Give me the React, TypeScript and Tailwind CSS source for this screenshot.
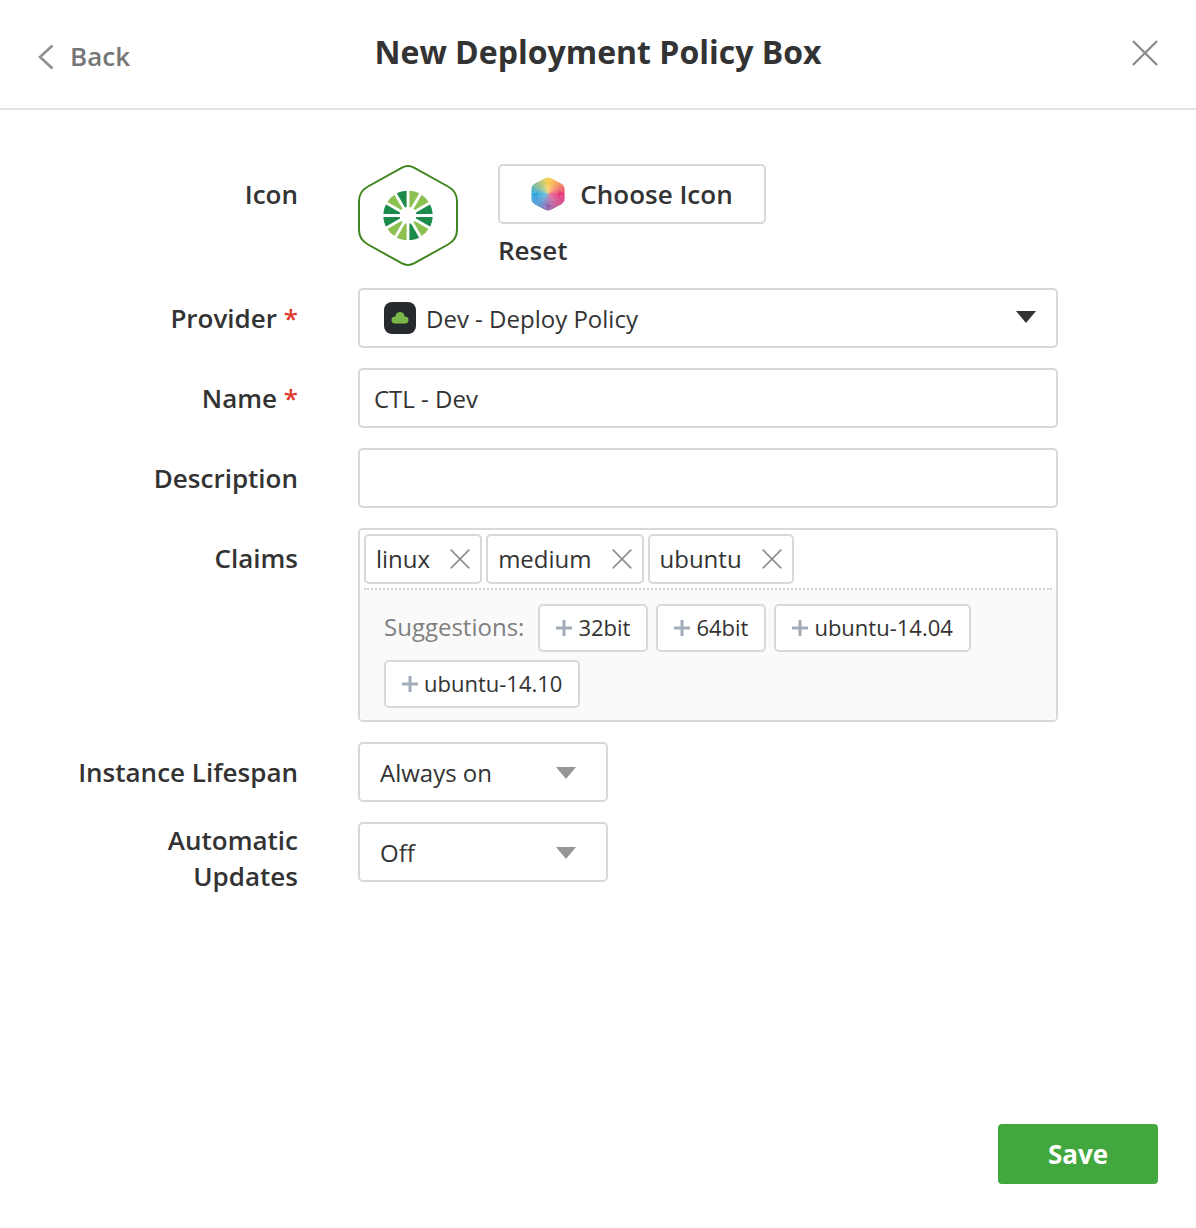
import React from "react";

function Label({ children, className = "" }: { children: React.ReactNode; className?: string }) {
  return (
    <div className={"w-[298px] shrink-0 text-right text-[26px] leading-[36px] font-semibold text-[#333333] " + className}>
      {children}
    </div>
  );
}

function Star() {
  return <span className="text-[#e0382f]"> *</span>;
}

function wedge(cx: number, cy: number, r1: number, a0: number, a1: number) {
  const p = (a: number) => {
    const t = ((a - 90) * Math.PI) / 180;
    return `${(cx + r1 * Math.cos(t)).toFixed(2)} ${(cy + r1 * Math.sin(t)).toFixed(2)}`;
  };
  return `M${cx} ${cy} L${p(a0)} A${r1} ${r1} 0 0 1 ${p(a1)} Z`;
}

function HexLogo() {
  const L = "#8cc152";
  const D = "#1b8a4b";
  const seq = [L, L, D, D, L, D, L, L, D, D, L, D];
  return (
    <svg width="100" height="103" viewBox="0 0 100 103" className="shrink-0">
      <path
        d="M44 3.6 Q50 0.6 56 3.6 L90 22.5 Q99 27.5 99 37 L99 66 Q99 75.5 90 80.5 L56 99.4 Q50 102.4 44 99.4 L10 80.5 Q1 75.5 1 66 L1 37 Q1 27.5 10 22.5 Z"
        fill="#fff"
        stroke="#3f861f"
        strokeWidth="2"
      />
      {seq.map((c, i) => (
        <path key={i} d={wedge(50, 51.5, 24.7, i * 30, i * 30 + 30)} fill={c} />
      ))}
      {[0, 30, 60, 90, 120, 150].map((a) => (
        <line key={a} x1="50" y1="24" x2="50" y2="79" stroke="#fff" strokeWidth="2.8" transform={`rotate(${a} 50 51.5)`} />
      ))}
      <circle cx="50" cy="51.5" r="8.5" fill="#fff" />
    </svg>
  );
}

const rainbow: [number, number[]][] = [
  [0, [248, 205, 76]],
  [45, [245, 150, 84]],
  [90, [232, 56, 122]],
  [135, [206, 80, 140]],
  [180, [144, 100, 172]],
  [225, [82, 150, 208]],
  [270, [46, 168, 224]],
  [315, [150, 190, 130]],
  [360, [248, 205, 76]],
];

function colorAt(a: number) {
  for (let i = 0; i < rainbow.length - 1; i++) {
    const [a0, c0] = rainbow[i];
    const [a1, c1] = rainbow[i + 1];
    if (a >= a0 && a <= a1) {
      const t = (a - a0) / (a1 - a0);
      const c = c0.map((v, k) => Math.round(v + (c1[k] - v) * t));
      return `rgb(${c[0]},${c[1]},${c[2]})`;
    }
  }
  return "#fff";
}

function ChooseHex() {
  const angles = Array.from({ length: 72 }, (_, i) => i * 5);
  return (
    <svg width="34" height="34" viewBox="0 0 34 34" className="shrink-0">
      <defs>
        <clipPath id="hexclip">
          <path d="M14 1.2 Q17 -0.2 20 1.2 L30 6.6 Q33.5 8.6 33.5 12 L33.5 22 Q33.5 25.4 30 27.4 L20 32.8 Q17 34.2 14 32.8 L4 27.4 Q0.5 25.4 0.5 22 L0.5 12 Q0.5 8.6 4 6.6 Z" />
        </clipPath>
      </defs>
      <g clipPath="url(#hexclip)">
        {angles.map((a) => (
          <path key={a} d={wedge(17, 17, 26, a, a + 5.6)} fill={colorAt(a + 2.5)} />
        ))}
      </g>
    </svg>
  );
}

function X({ size = 20, color = "#8f8f8f" }: { size?: number; color?: string }) {
  return (
    <svg width={size} height={size} viewBox="0 0 20 20" className="shrink-0">
      <path d="M0.7 0.7 L19.3 19.3 M19.3 0.7 L0.7 19.3" stroke={color} strokeWidth="1.7" fill="none" />
    </svg>
  );
}

function Tag({ text }: { text: string }) {
  return (
    <div className="h-[50px] flex items-center pl-[10px] pr-[10px] border-2 border-[#d8d8d8] rounded-[5px] bg-white text-[24px] text-[#333333]">
      <span>{text}</span>
      <span className="ml-[20px] flex">
        <X />
      </span>
    </div>
  );
}

function Suggest({ text }: { text: string }) {
  return (
    <div className="h-[48px] flex items-center pl-[15px] pr-[16px] border-2 border-[#d8d8d8] rounded-[5px] bg-white text-[22px] text-[#333333]">
      <svg width="18" height="18" viewBox="0 0 18 18" className="mr-[5px] shrink-0">
        <path d="M9 1 V17 M1 9 H17" stroke="#a3adb8" strokeWidth="3" fill="none" />
      </svg>
      <span className="pb-[2px]">{text}</span>
    </div>
  );
}

function Caret({ color, className }: { color: string; className: string }) {
  return (
    <svg width="20" height="12" viewBox="0 0 20 12" className={"shrink-0 " + className}>
      <path d="M0 0 H20 L10 12 Z" fill={color} />
    </svg>
  );
}

function Select({ text }: { text: string }) {
  return (
    <div className="w-[250px] h-[60px] flex items-center justify-between pl-[20px] pr-[30px] border-2 border-[#d8d8d8] rounded-[5px] bg-white text-[24px] text-[#333333]">
      <span className="pt-[2px]">{text}</span>
      <Caret color="#969696" className="mt-[2px]" />
    </div>
  );
}

export default function App() {
  return (
    <div
      className="w-[1196px] h-[1228px] flex flex-col bg-white text-[#333333] overflow-hidden"
      style={{ fontFamily: '"Open Sans", sans-serif' }}
    >
      <header className="h-[110px] shrink-0 border-b-2 border-[#e3e3e3] relative flex items-start justify-center">
        <h1 className="mt-[30px] text-[32px] leading-[44px] font-bold text-[#333333]">New Deployment Policy Box</h1>
        <div className="absolute left-[38px] top-[38px] flex items-center gap-[16px]">
          <svg width="16" height="26" viewBox="0 0 16 26" className="mt-[2px]">
            <path d="M14.5 1.5 L2 13 L14.5 24.5" stroke="#8f8f8f" strokeWidth="2.6" fill="none" />
          </svg>
          <span className="text-[26px] leading-[36px] font-semibold text-[#767676]">Back</span>
        </div>
        <div className="absolute left-[1132px] top-[40px] flex">
          <X size={26} color="#8a8a8a" />
        </div>
      </header>

      <main className="flex-1 flex flex-col pt-[54px]">
        <div className="flex">
          <Label className="pt-[12px]">Icon</Label>
          <div className="ml-[60px] flex">
            <HexLogo />
            <div className="ml-[40px] flex flex-col items-start">
              <div className="w-[268px] h-[60px] flex items-center justify-center gap-[15px] border-2 border-[#d8d8d8] rounded-[5px] text-[26px] font-semibold text-[#333333]">
                <ChooseHex />
                <span>Choose Icon</span>
              </div>
              <div className="mt-[8px] text-[26px] leading-[36px] font-semibold text-[#333333]">Reset</div>
            </div>
          </div>
        </div>

        <div className="flex items-center mt-[20px]">
          <Label>Provider<Star /></Label>
          <div className="ml-[60px] w-[700px] h-[60px] flex items-center pl-[24px] pr-[20px] border-2 border-[#d8d8d8] rounded-[5px] text-[24px]">
            <div className="w-[32px] h-[32px] rounded-[8px] bg-[#262a2e] flex items-center justify-center shrink-0">
              <svg width="18" height="14" viewBox="0 0 18 14">
                <circle cx="9" cy="5.5" r="4.5" fill="#7ab648" />
                <circle cx="4" cy="9" r="3.5" fill="#7ab648" />
                <circle cx="14" cy="9" r="3.5" fill="#7ab648" />
                <rect x="4" y="8" width="10" height="4.5" fill="#7ab648" />
              </svg>
            </div>
            <span className="ml-[10px] flex-1 pt-[2px]">Dev - Deploy Policy</span>
            <Caret color="#333333" className="-mt-[2px]" />
          </div>
        </div>

        <div className="flex items-center mt-[20px]">
          <Label>Name<Star /></Label>
          <div className="ml-[60px] w-[700px] h-[60px] flex items-center pl-[14px] pt-[2px] border-2 border-[#d8d8d8] rounded-[5px] text-[24px]">
            CTL - Dev
          </div>
        </div>

        <div className="flex items-center mt-[20px]">
          <Label>Description</Label>
          <div className="ml-[60px] w-[700px] h-[60px] border-2 border-[#d8d8d8] rounded-[5px]" />
        </div>

        <div className="flex mt-[20px]">
          <Label className="pt-[12px]">Claims</Label>
          <div className="ml-[60px] w-[700px] border-2 border-[#d8d8d8] rounded-[5px] overflow-hidden">
            <div className="bg-white pt-[4px] px-[4px]">
              <div className="flex gap-[4px] pb-[4px] border-b-2 border-dotted border-[#d0d0d0]">
                <Tag text="linux" />
                <Tag text="medium" />
                <Tag text="ubuntu" />
              </div>
            </div>
            <div className="bg-[#fafafa] pt-[14px] pb-[12px] pl-[24px] pr-[20px] flex flex-wrap items-center gap-x-[8px] gap-y-[8px]">
              <span className="text-[24px] text-[#808080] mr-[6px] pb-[2px]">Suggestions:</span>
              <Suggest text="32bit" />
              <Suggest text="64bit" />
              <Suggest text="ubuntu-14.04" />
              <Suggest text="ubuntu-14.10" />
            </div>
          </div>
        </div>

        <div className="flex items-center mt-[20px]">
          <Label>Instance Lifespan</Label>
          <div className="ml-[60px]"><Select text="Always on" /></div>
        </div>

        <div className="flex items-start mt-[20px]">
          <Label>Automatic<br />Updates</Label>
          <div className="ml-[60px]"><Select text="Off" /></div>
        </div>

        <div className="flex-1" />
        <div className="flex justify-end pr-[38px] pb-[44px]">
          <button className="w-[160px] h-[60px] rounded-[4px] bg-[#41a73e] text-white text-[26px] font-bold">Save</button>
        </div>
      </main>
    </div>
  );
}
